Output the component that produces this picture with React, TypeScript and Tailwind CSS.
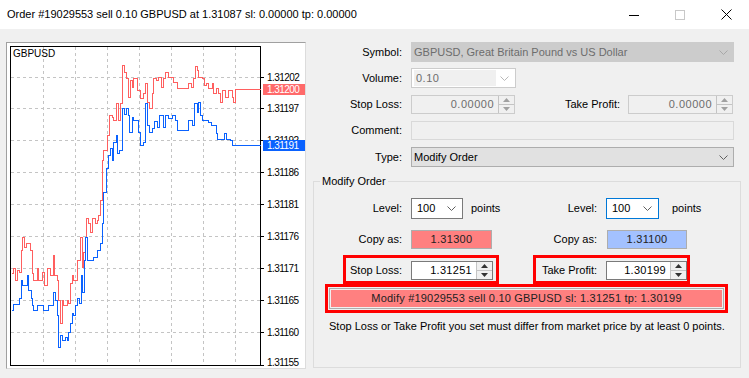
import React from 'react';

const red: number[][] = [
  [11, 273], [13, 268], [15, 280], [17, 270], [19, 272], [21, 250], [22, 237], [24, 247], [26, 243], [28, 243],
  [30, 250], [32, 273], [33, 280], [37, 268], [38, 280], [42, 272], [44, 285], [47, 268], [50, 275], [53, 255],
  [54, 275], [57, 280], [58, 300], [60, 323], [62, 300], [63, 305], [67, 300], [68, 303], [70, 283], [72, 275],
  [73, 280], [77, 260], [80, 237], [82, 267], [83, 252], [85, 237], [86, 218], [88, 223], [90, 232], [92, 218],
  [95, 223], [97, 220], [98, 215], [100, 200], [102, 160], [103, 150], [107, 135], [109, 115], [112, 117], [113, 120],
  [116, 103], [118, 120], [120, 103], [122, 65], [124, 72], [126, 78], [128, 97], [130, 80], [132, 87], [133, 78],
  [136, 78], [137, 90], [140, 98], [143, 93], [145, 83], [147, 102], [149, 108], [152, 93], [153, 78], [156, 80],
  [158, 77], [161, 87], [163, 78], [165, 72], [168, 77], [172, 77], [173, 82], [177, 88], [185, 88], [188, 83],
  [191, 87], [193, 78], [195, 66], [197, 70], [198, 77], [202, 78], [204, 85], [206, 83], [208, 88], [212, 83],
  [213, 93], [216, 88], [218, 93], [220, 102], [222, 90], [225, 97], [228, 90], [232, 97], [233, 102], [235, 89],
  [260, 89],
];

const blue: number[][] = [
  [11, 310], [13, 304], [18, 304], [19, 298], [21, 280], [22, 285], [25, 285], [27, 275], [28, 290], [31, 298],
  [32, 305], [33, 310], [37, 305], [42, 305], [43, 310], [47, 310], [48, 305], [52, 305], [53, 292], [55, 300],
  [57, 315], [58, 347], [60, 335], [62, 340], [65, 337], [67, 340], [68, 332], [70, 323], [72, 313], [73, 315],
  [75, 305], [77, 298], [79, 303], [81, 275], [82, 292], [84, 260], [85, 237], [87, 260], [92, 260], [93, 257],
  [97, 250], [100, 243], [102, 223], [103, 192], [106, 168], [108, 155], [110, 148], [112, 160], [113, 142], [116, 135],
  [117, 153], [119, 150], [122, 108], [124, 114], [126, 108], [128, 115], [129, 132], [132, 117], [133, 120], [137, 120],
  [138, 132], [140, 145], [143, 142], [145, 103], [147, 125], [149, 132], [152, 128], [154, 121], [157, 127], [159, 115],
  [163, 127], [165, 115], [168, 118], [172, 115], [175, 120], [177, 130], [187, 130], [188, 120], [192, 125], [194, 103],
  [197, 112], [198, 102], [200, 115], [202, 120], [205, 120], [208, 122], [211, 125], [213, 125], [216, 133], [217, 139],
  [223, 139], [224, 133], [226, 139], [230, 140], [232, 145], [260, 145],
];

const stepPath = (pts: number[][]) =>
  pts
    .map(([x, y], i) => (i === 0 ? `M${x + 0.5} ${y + 0.5}` : `H${x + 0.5} V${y + 0.5}`))
    .join(' ');

const gridX = [43, 75, 107, 139, 171, 203, 235];
const levels: [number, string][] = [
  [77, '1.31202'],
  [108, '1.31197'],
  [140, '1.31192'],
  [172, '1.31186'],
  [204, '1.31181'],
  [236, '1.31176'],
  [268, '1.31171'],
  [300, '1.31165'],
  [332, '1.31160'],
  [365, '1.31155'],
];

const Chart = () => (
  <div className="ml-[6px] mt-[13px] w-[300px] h-[327px] border border-[#a0a0a0] border-r-[#dcdcdc] border-b-[#dcdcdc] bg-white">
    <svg width="298" height="325" viewBox="7 43 298 325" fontFamily="'Liberation Sans', Arial, sans-serif">
      {gridX.map((x) => (
        <line key={x} x1={x + 0.5} y1={47} x2={x + 0.5} y2={365} stroke="#c4c4c4" strokeDasharray="3 3" />
      ))}
      {levels.slice(0, 9).map(([y]) => (
        <line key={y} x1={11} y1={y + 0.5} x2={260} y2={y + 0.5} stroke="#c4c4c4" strokeDasharray="3 3" />
      ))}
      <rect x={10.5} y={46.5} width={250} height={319} fill="none" stroke="#000" shapeRendering="crispEdges" />
      {levels.map(([y]) => (
        <line key={'t' + y} x1={260} y1={y + 0.5} x2={264} y2={y + 0.5} stroke="#000" />
      ))}
      {levels.map(([y, t], i) => (
        <text
          key={'l' + y}
          x={267}
          y={i === levels.length - 1 ? 366 : y + 4}
          fontSize="10"
          letterSpacing="-0.55"
          fill="#000"
        >
          {t}
        </text>
      ))}
      <path d={stepPath(red)} fill="none" stroke="#ff5f5f" strokeWidth="1" shapeRendering="crispEdges" />
      <path d={stepPath(blue)} fill="none" stroke="#0a62ff" strokeWidth="1" shapeRendering="crispEdges" />
      <rect x={263} y={84} width={42} height={11} fill="#ff6a6a" />
      <text x={267} y={93} fontSize="10" letterSpacing="-0.55" fill="#fff">
        1.31200
      </text>
      <rect x={263} y={140} width={42} height={11} fill="#0a62ff" />
      <text x={267} y={149} fontSize="10" letterSpacing="-0.55" fill="#fff">
        1.31191
      </text>
      <text x={13} y={57} fontSize="10" fill="#000">
        GBPUSD
      </text>
    </svg>
  </div>
);

const Chevron = ({ color = '#606060' }: { color?: string }) => (
  <svg width="9" height="5" viewBox="0 0 9 5">
    <path d="M0.5 0.5 L4.5 4.5 L8.5 0.5" fill="none" stroke={color} strokeWidth="1" />
  </svg>
);

const Spinner = ({ muted }: { muted?: boolean }) => {
  const c = muted ? '#a0a0a0' : '#333';
  return (
    <div className="w-[16px] self-stretch flex flex-col border-l border-[#c4c4c4] bg-[#f0f0f0]">
      <div className="flex-1 flex items-center justify-center border-b border-[#c4c4c4]">
        <svg width="7" height="4" viewBox="0 0 7 4">
          <path d="M0 4 L3.5 0 L7 4 Z" fill={c} />
        </svg>
      </div>
      <div className="flex-1 flex items-center justify-center">
        <svg width="7" height="4" viewBox="0 0 7 4">
          <path d="M0 0 L3.5 4 L7 0 Z" fill={c} />
        </svg>
      </div>
    </div>
  );
};

const Label = ({ w, children }: { w: string; children: React.ReactNode }) => (
  <div className={`${w} text-right shrink-0`}>{children}</div>
);

const Form = () => (
  <div className="flex flex-col pt-[13px] w-[443px]">
    <div className="flex items-center h-[20px]">
      <Label w="w-[96px]">Symbol:</Label>
      <div className="ml-[9px] w-[323px] h-[20px] bg-[#cccccc] border border-[#cccccc] text-[#6d6d6d] pl-[2px] pr-[5px] flex items-center justify-between">
        <span>GBPUSD, Great Britain Pound vs US Dollar</span>
        <Chevron color="#a8a8a8" />
      </div>
    </div>

    <div className="flex items-center h-[20px] mt-[6px]">
      <Label w="w-[96px]">Volume:</Label>
      <div className="ml-[9px] w-[105px] h-[20px] bg-white border border-[#cccccc] flex items-center pr-[6px]">
        <div className="ml-[2px] w-[82px] h-[16px] bg-[#f0f0f0] text-[#6d6d6d] pl-[2px] flex items-center tracking-[0.5px]">0.10</div>
        <div className="flex-1 flex justify-end">
          <Chevron color="#b8b8b8" />
        </div>
      </div>
    </div>

    <div className="flex items-center h-[19px] mt-[7px]">
      <Label w="w-[96px]">Stop Loss:</Label>
      <div className="ml-[9px] w-[104px] h-[19px] bg-[#f0f0f0] border border-[#cccccc] flex">
        <div className="flex-1 text-right text-[#6d6d6d] pr-[4px] flex items-center justify-end tracking-[0.5px]">0.00000</div>
        <Spinner muted />
      </div>
      <Label w="w-[105px]">Take Profit:</Label>
      <div className="ml-[8px] w-[105px] h-[19px] bg-[#f0f0f0] border border-[#cccccc] flex">
        <div className="flex-1 text-right text-[#6d6d6d] pr-[4px] flex items-center justify-end tracking-[0.5px]">0.00000</div>
        <Spinner muted />
      </div>
    </div>

    <div className="flex items-center h-[19px] mt-[7px]">
      <Label w="w-[96px]">Comment:</Label>
      <div className="ml-[9px] w-[323px] h-[19px] bg-[#f0f0f0] border border-[#d9d9d9]" />
    </div>

    <div className="flex items-center h-[20px] mt-[7px]">
      <Label w="w-[96px]">Type:</Label>
      <div className="ml-[9px] w-[323px] h-[20px] bg-[#e1e1e1] border border-[#adadad] pl-[2px] pr-[5px] flex items-center justify-between">
        <span>Modify Order</span>
        <Chevron />
      </div>
    </div>

    <fieldset className="ml-[7px] mt-[7px] w-[428px] h-[194px] border border-[#dcdcdc]">
      <legend className="ml-[6px] px-[2px] leading-[14px]">Modify Order</legend>

      <div className="flex items-center h-[21px] mt-[10px]">
        <div className="w-[206px] flex items-center shrink-0">
          <Label w="w-[88px]">Level:</Label>
          <div className="ml-[9px] w-[52px] h-[21px] bg-white border border-[#7a7a7a] pl-[5px] pr-[6px] flex items-center justify-between">
            <span>100</span>
            <Chevron />
          </div>
          <span className="ml-[8px]">points</span>
        </div>
        <Label w="w-[77px]">Level:</Label>
        <div className="ml-[9px] w-[53px] h-[21px] bg-white border border-[#0078d7] pl-[5px] pr-[6px] flex items-center justify-between">
          <span>100</span>
          <Chevron />
        </div>
        <span className="ml-[13px]">points</span>
      </div>

      <div className="flex items-center h-[19px] mt-[11px]">
        <div className="w-[206px] flex items-center shrink-0">
          <Label w="w-[88px]">Copy as:</Label>
          <div className="ml-[9px] w-[81px] h-[19px] bg-[#ff8080] border border-[#adadad] flex items-center justify-center text-[#222] tracking-[0.3px]">
            1.31300
          </div>
        </div>
        <Label w="w-[77px]">Copy as:</Label>
        <div className="ml-[10px] w-[80px] h-[19px] bg-[#a3c1ff] border border-[#adadad] flex items-center justify-center text-[#222] tracking-[0.3px]">
          1.31100
        </div>
      </div>

      <div className="flex items-center mt-[6px]">
        <div className="w-[206px] flex shrink-0">
          <div className="ml-[29px] border-[3px] border-[#ff0000] pt-[3px] pb-[1px] pr-[3px] flex items-center">
            <Label w="w-[56px]">Stop Loss:</Label>
            <div className="ml-[9px] w-[82px] h-[19px] bg-white border border-[#7a7a7a] flex">
              <div className="flex-1 pr-[4px] flex items-center justify-end tracking-[0.3px]">1.31251</div>
              <Spinner />
            </div>
          </div>
        </div>
        <div className="ml-[13px] border-[3px] border-[#ff0000] pt-[3px] pb-[1px] flex items-center">
          <Label w="w-[61px]">Take Profit:</Label>
          <div className="ml-[9px] w-[81px] h-[19px] bg-white border border-[#7a7a7a] flex">
            <div className="flex-1 pr-[4px] flex items-center justify-end tracking-[0.3px]">1.30199</div>
            <Spinner />
          </div>
        </div>
      </div>

      <div className="ml-[11px] w-[403px] h-[29px] border-[3px] border-[#ff0000] p-[1px]">
        <div className="w-full h-full border border-[#adadad] p-[1px] bg-[#f0f0f0]">
          <div className="w-full h-full bg-[#ff8080] flex items-center justify-center text-[#222] tracking-[0.2px]">
            Modify #19029553 sell 0.10 GBPUSD sl: 1.31251 tp: 1.30199
          </div>
        </div>
      </div>

      <div className="ml-[15px] mt-[6px] leading-[14px]">
        Stop Loss or Take Profit you set must differ from market price by at least 0 points.
      </div>
    </fieldset>
  </div>
);

const TitleBar = () => (
  <div className="h-[29px] bg-white flex items-center pl-[7px] shrink-0">
    <span className="flex-1">Order #19029553 sell 0.10 GBPUSD at 1.31087 sl: 0.00000 tp: 0.00000</span>
    <div className="flex items-center">
      <div className="w-[46px] flex justify-center">
        <svg width="10" height="10" viewBox="0 0 10 10">
          <line x1="0" y1="5.5" x2="10" y2="5.5" stroke="#000" />
        </svg>
      </div>
      <div className="w-[46px] flex justify-center">
        <svg width="10" height="10" viewBox="0 0 10 10">
          <rect x="0.5" y="0.5" width="9" height="9" fill="none" stroke="#c8c8c8" />
        </svg>
      </div>
      <div className="w-[46px] flex justify-center">
        <svg width="11" height="11" viewBox="0 0 11 11">
          <path d="M0.5 0.5 L10.5 10.5 M10.5 0.5 L0.5 10.5" stroke="#000" strokeWidth="1" />
        </svg>
      </div>
    </div>
  </div>
);

export default function App() {
  return (
    <div className="w-[749px] h-[378px] bg-[#f0f0f0] flex flex-col overflow-hidden text-[11px] text-black font-['Liberation_Sans',Arial,sans-serif]">
      <TitleBar />
      <div className="flex">
        <Chart />
        <Form />
      </div>
    </div>
  );
}
